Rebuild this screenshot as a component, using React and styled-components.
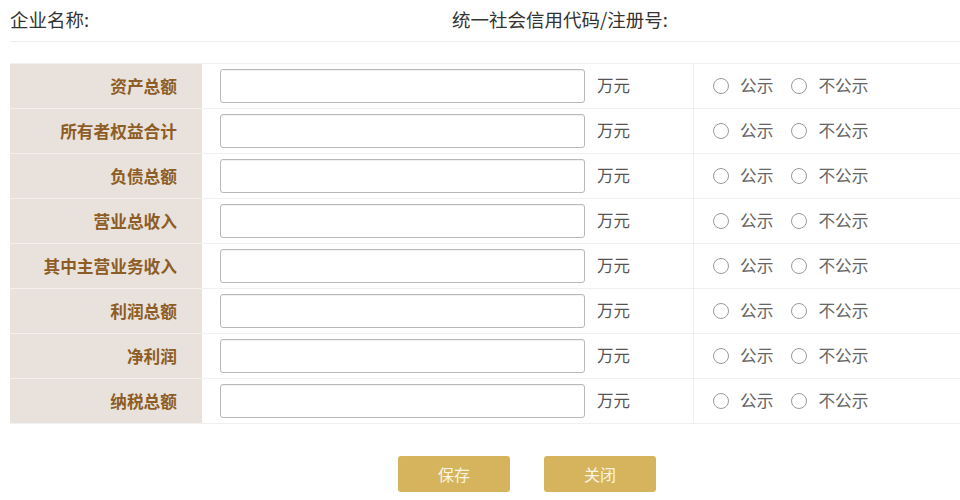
import React from 'react';
import styled, { createGlobalStyle } from 'styled-components';

const GlobalStyle = createGlobalStyle`
  body {
    margin: 0;
    background: #fff;
    font-family: "Noto Sans CJK SC", "Noto Sans", sans-serif;
  }
`;

const rows = [
  '资产总额',
  '所有者权益合计',
  '负债总额',
  '营业总收入',
  '其中主营业务收入',
  '利润总额',
  '净利润',
  '纳税总额',
];

const Page = styled.div`
  padding-left: 10px;
  width: 950px;
`;

const Header = styled.div`
  display: flex;
  align-items: center;
  height: 41px;
  border-bottom: 1px solid #eeeeee;
  font-size: 18.5px;
  color: #333;
`;

const HeaderItem = styled.div`
  width: ${(props) => props.width || 'auto'};
  margin-top: -3px;
`;

const Table = styled.div`
  margin-top: 21px;
  display: grid;
  grid-template-columns: 192px 492px 1fr;
  border-bottom: 1px solid #f0f0f0;
`;

const LabelCell = styled.div`
  background: #e9e2dc;
  height: 45px;
  display: flex;
  align-items: center;
  justify-content: flex-end;
  padding-right: 25px;
  box-sizing: border-box;
  border-top: 1px solid #f4f0ec;
  font-size: 16.7px;
  font-weight: bold;
  color: #8d5d25;
`;

const InputCell = styled.div`
  height: 45px;
  display: flex;
  align-items: center;
  padding-left: 18px;
  box-sizing: border-box;
  border-top: 1px solid #f0f0f0;
  border-right: 1px solid #eeeeee;
`;

const TextInput = styled.input`
  width: 365px;
  height: 34px;
  box-sizing: border-box;
  border: 1px solid #b8b8b8;
  border-radius: 3px;
  background: #fff;
  outline: none;
  box-shadow: inset 0 1px 1px rgba(0, 0, 0, 0.06);
`;

const Unit = styled.span`
  margin-left: 12px;
  margin-top: -3px;
  font-size: 16.5px;
  color: #555;
`;

const RadioCell = styled.div`
  height: 45px;
  display: flex;
  align-items: center;
  padding-left: 19px;
  box-sizing: border-box;
  border-top: 1px solid #f0f0f0;
  gap: 18px;
`;

const RadioOption = styled.label`
  display: inline-flex;
  align-items: center;
  gap: 11px;
  font-size: 16.7px;
  color: #666;
  margin-top: -2px;
`;

const Circle = styled.span`
  width: 14px;
  height: 14px;
  border: 1px solid #9a9a9a;
  border-radius: 50%;
  display: inline-block;
  margin-top: 2px;
`;

const Actions = styled.div`
  display: flex;
  gap: 34px;
  padding-left: 388px;
  margin-top: 32px;
`;

const Button = styled.button`
  width: 112px;
  height: 36px;
  border: none;
  border-radius: 3px;
  background: #d5b45d;
  color: #fbf4e4;
  font-family: inherit;
  font-size: 16px;
  cursor: pointer;
`;

export default function App() {
  return (
    <Page>
      <GlobalStyle />
      <Header>
        <HeaderItem width="442px">企业名称:</HeaderItem>
        <HeaderItem>统一社会信用代码/注册号:</HeaderItem>
      </Header>
      <Table>
        {rows.map((label) => (
          <React.Fragment key={label}>
            <LabelCell>{label}</LabelCell>
            <InputCell>
              <TextInput type="text" />
              <Unit>万元</Unit>
            </InputCell>
            <RadioCell>
              <RadioOption>
                <Circle />
                公示
              </RadioOption>
              <RadioOption>
                <Circle />
                不公示
              </RadioOption>
            </RadioCell>
          </React.Fragment>
        ))}
      </Table>
      <Actions>
        <Button>保存</Button>
        <Button>关闭</Button>
      </Actions>
    </Page>
  );
}
